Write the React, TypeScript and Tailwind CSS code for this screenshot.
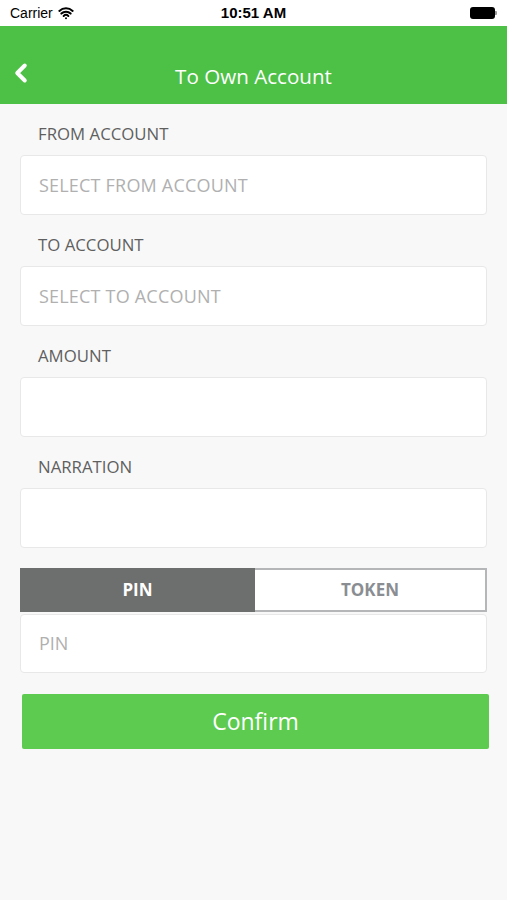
import React from "react";
import { ChevronLeft, Wifi } from "lucide-react";

const font = { fontFamily: '"Open Sans", "Noto Sans", sans-serif' };

const Field = ({ label, placeholder }: { label: string; placeholder?: string }) => (
  <div className="flex flex-col">
    <div className="h-[20px] pl-[38px] text-[16.8px] leading-[20px] text-[#5f5f5f] mt-[20px]">{label}</div>
    <div className="mx-[20px] mt-[11px] h-[60px] rounded-[4px] border border-[#e8e8e8] bg-white flex items-center pl-[18px] text-[18px] text-[#b0b0b0] tracking-[0.2px]">
      {placeholder}
    </div>
  </div>
);

export default function App() {
  return (
    <div className="w-[507px] h-[900px] bg-[#f8f8f8] flex flex-col" style={font}>
      {/* Status bar */}
      <div className="h-[26px] bg-white flex items-center justify-between px-[10px] relative">
        <div className="flex items-center gap-[5px] text-[14px] text-black" style={{ fontFamily: '"Liberation Sans", sans-serif' }}>
          Carrier
          <Wifi size={16} strokeWidth={3} />
        </div>
        <div className="absolute left-0 right-0 text-center text-[15px] font-bold text-black pointer-events-none" style={{ fontFamily: '"Liberation Sans", sans-serif' }}>
          10:51 AM
        </div>
        <div className="flex items-center">
          <div className="w-[25px] h-[12px] rounded-[3px] bg-black" />
          <div className="w-[2px] h-[4px] bg-[#999] rounded-r-[1px]" />
        </div>
      </div>

      {/* Header */}
      <div className="h-[78px] bg-[#4dc046] relative flex items-center justify-center pt-[22px]">
        <ChevronLeft className="absolute left-[6px] top-[32px] text-white" size={30} strokeWidth={3.2} />
        <div className="text-white text-[20.6px]">To Own Account</div>
      </div>

      <Field label="FROM ACCOUNT" placeholder="SELECT FROM ACCOUNT" />
      <Field label="TO ACCOUNT" placeholder="SELECT TO ACCOUNT" />
      <Field label="AMOUNT" />
      <Field label="NARRATION" />

      {/* Tabs */}
      <div className="mx-[20px] mt-[20px] h-[44px] grid grid-cols-[235px_1fr]">
        <div className="bg-[#6d6e6e] text-white font-bold text-[17px] flex items-center justify-center">PIN</div>
        <div className="bg-white text-[#8a8e93] font-bold text-[17px] flex items-center justify-center border-y-2 border-r-2 border-[#b4b6b8]">
          TOKEN
        </div>
      </div>
      <div className="mx-[20px] mt-[2px] h-[59px] rounded-[4px] border border-[#e8e8e8] bg-white flex items-center pl-[18px] text-[18px] text-[#b0b0b0]">
        PIN
      </div>

      {/* Confirm */}
      <div className="ml-[22px] mr-[18px] mt-[21px] h-[55px] rounded-[2px] bg-[#5ccb4f] flex items-center justify-center text-white text-[23px]">
        Confirm
      </div>
    </div>
  );
}
